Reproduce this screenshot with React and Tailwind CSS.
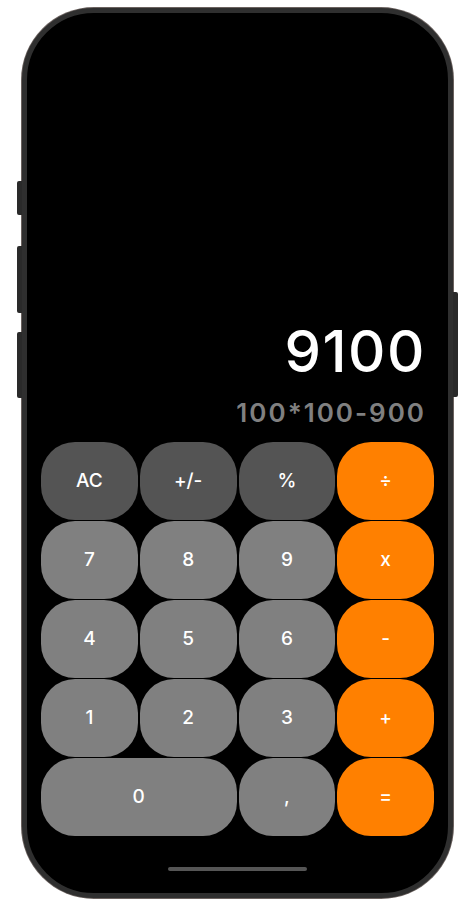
const rows = [
  [
    { label: 'AC', kind: 'fn' },
    { label: '+/-', kind: 'fn' },
    { label: '%', kind: 'fn' },
    { label: '÷', kind: 'op' },
  ],
  [
    { label: '7' },
    { label: '8' },
    { label: '9' },
    { label: 'x', kind: 'op' },
  ],
  [
    { label: '4' },
    { label: '5' },
    { label: '6' },
    { label: '-', kind: 'op' },
  ],
  [
    { label: '1' },
    { label: '2' },
    { label: '3' },
    { label: '+', kind: 'op' },
  ],
  [
    { label: '0', wide: true },
    { label: ',' },
    { label: '=', kind: 'op' },
  ],
]

const CalcButton = ({ label, kind, wide }) => {
  const color =
    kind === 'op' ? 'bg-[#ff8000]' : kind === 'fn' ? 'bg-[#545454]' : 'bg-[#808080]'
  return (
    <button
      className={`${color} ${wide ? 'col-span-2' : ''} h-[78px] rounded-[34px] flex items-center justify-center text-white text-[19px] font-medium`}
    >
      {label}
    </button>
  )
}

export default function App() {
  return (
    <div
      className="min-h-screen bg-white pl-[22px] pt-[8px]"
      style={{ fontFamily: 'Inter, "Noto Sans", sans-serif' }}
    >
      <div className="relative w-[431px] h-[890px]">
        {/* side buttons */}
        <div className="absolute left-[-5px] top-[173px] w-[5px] h-[34px] rounded-l-[2px] bg-[#2a2a2a]" />
        <div className="absolute left-[-5px] top-[238px] w-[5px] h-[67px] rounded-l-[2px] bg-[#2a2a2a]" />
        <div className="absolute left-[-5px] top-[324px] w-[5px] h-[66px] rounded-l-[2px] bg-[#2a2a2a]" />
        <div className="absolute right-[-5px] top-[284px] w-[5px] h-[105px] rounded-r-[2px] bg-[#2a2a2a]" />

        <div className="w-full h-full rounded-[72px] border-[5px] border-[#2f2f2f] ring-1 ring-[#6b625f] bg-black flex flex-col px-[14px]">
          <div className="flex-1" />

          <div className="flex flex-col items-end pr-[8px]">
            <div className="text-white text-[58px] leading-none font-medium tracking-[1.5px]">9100</div>
            <div className="mt-[20px] text-[#808080] text-[26px] leading-none font-semibold tracking-[2px]">
              100*100-900
            </div>
          </div>

          <div className="mt-[16px] grid grid-cols-4 gap-x-[2px] gap-y-[1px]">
            {rows.flat().map((b, i) => (
              <CalcButton key={i} {...b} />
            ))}
          </div>

          <div className="mt-[31px] mb-[22px] self-center w-[139px] h-[4px] rounded-full bg-[#555]" />
        </div>
      </div>
    </div>
  )
}
